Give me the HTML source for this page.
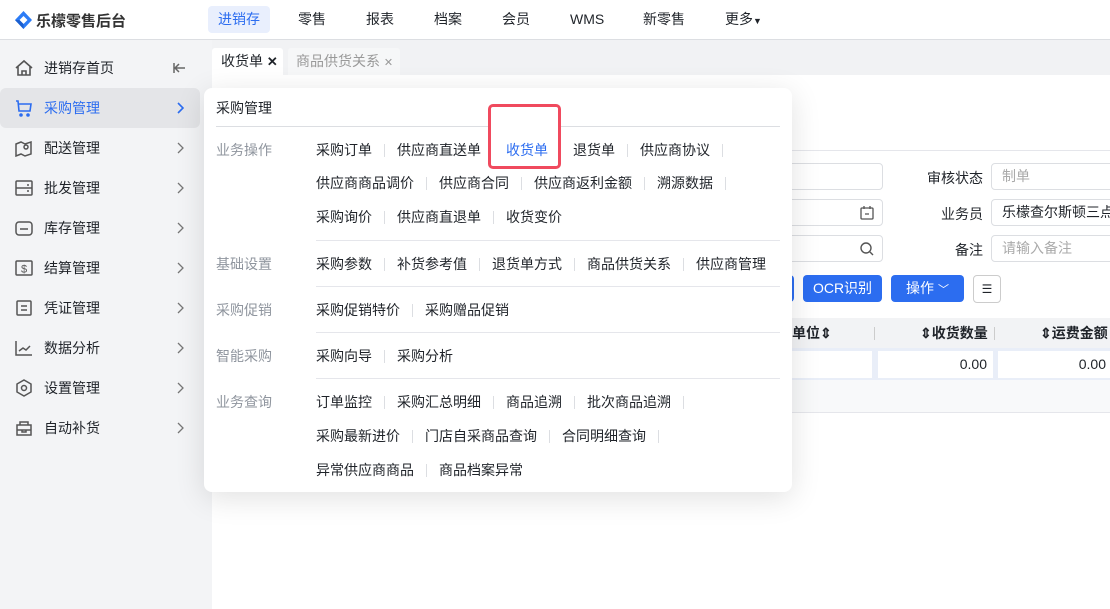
<!DOCTYPE html>
<html><head><meta charset="utf-8"><style>
*{box-sizing:border-box;margin:0;padding:0}
body{width:1110px;height:609px;overflow:hidden;position:relative;background:#fff;font-family:"Liberation Sans","Noto Sans CJK SC",sans-serif;font-size:14px;color:#1f2329}
.abs{position:absolute}
.top{left:0;top:0;width:1110px;height:40px;background:#fff;border-bottom:1px solid #dcdee2}
.nav{top:6px;height:27px;line-height:27px;font-size:14px;color:#1f2329}
.side{left:0;top:40px;width:212px;height:569px;background:#f3f4f6}
.si{left:0;width:200px;height:40px;line-height:40px}
.si span.t{position:absolute;left:44px;font-size:14px}
.si svg{position:absolute;left:14px;top:11px}
.si svg.ch{left:176px;top:14px}
.tabs{left:212px;top:40px;width:898px;height:35px;background:#f1f2f4}
.menu{left:204px;top:88px;width:588px;height:404px;background:#fff;border-radius:8px;box-shadow:0 6px 30px rgba(0,0,0,.12)}
.row{position:absolute;left:112px;display:flex;align-items:center;height:20px;font-size:14px;color:#1f2329;white-space:nowrap}
.row i{display:inline-block;width:1px;height:13px;background:#dcdee2;margin:0 12px}
.gl{position:absolute;left:12px;color:#8f959e;font-size:14px}
.hl{position:absolute;left:112px;width:464px;height:1px;background:#e5e6eb}
.lab{font-size:14px;color:#1f2329;text-align:right;width:80px}
.inp{border:1px solid #dcdee2;border-radius:4px;height:27px;background:#fff;font-size:14px;line-height:25px;padding-left:10px}
.btn{background:#2c6df0;color:#fff;border-radius:4px;height:27px;line-height:27px;text-align:center;font-size:14px}
</style></head><body>
<div class="abs top"></div>
<svg class="abs" style="left:15px;top:11px" width="17" height="18" viewBox="0 0 17 18"><path d="M8.5 0L17 9 8.5 18 0 9Z" fill="#2c7cf6"/><path d="M8.5 5L12.5 9 8.5 13 4.5 9Z" fill="#fff"/><path d="M0 9L4.5 9 8.5 13 8.5 18Z" fill="#1a5fd0"/></svg>
<div class="abs" style="left:36px;top:10px;font-size:15px;font-weight:bold;color:#333">乐檬零售后台</div>
<div class="abs nav" style="left:208px;width:62px;background:#e9effd;color:#2c6df0;border-radius:4px;text-align:center">进销存</div>
<div class="abs nav" style="left:298px">零售</div>
<div class="abs nav" style="left:366px">报表</div>
<div class="abs nav" style="left:434px">档案</div>
<div class="abs nav" style="left:502px">会员</div>
<div class="abs nav" style="left:570px">WMS</div>
<div class="abs nav" style="left:643px">新零售</div>
<div class="abs nav" style="left:725px">更多<span style="font-size:9px">▼</span></div>

<div class="abs side"></div>
<div class="abs si" style="top:48px"><svg width="20" height="18" viewBox="0 0 20 18" fill="none" stroke="#555" stroke-width="1.6"><path d="M2 9L10 2 18 9M4 7.5V16H16V7.5M8 16V12H12V16"/></svg><span class="t">进销存首页</span><svg class="ch" style="left:172px" width="14" height="12" viewBox="0 0 14 12" fill="none" stroke="#666" stroke-width="1.5"><path d="M2 1V11M3 6H13M7 2L3 6 7 10"/></svg></div>
<div class="abs si" style="top:88px;background:#e4e5e8;border-radius:6px;color:#2c6df0"><svg width="20" height="18" viewBox="0 0 20 18" fill="none" stroke="#2c6df0" stroke-width="1.6"><path d="M2 2H4L5 12H16L17 5H5"/><circle cx="7" cy="16" r="1" fill="#2c6df0"/><circle cx="14" cy="16" r="1" fill="#2c6df0"/></svg><span class="t">采购管理</span><svg class="ch" width="8" height="12" viewBox="0 0 8 12" fill="none" stroke="#2c6df0" stroke-width="1.6"><path d="M2 1L7 6 2 11"/></svg></div>
<div class="abs si" style="top:128px"><svg width="20" height="18" viewBox="0 0 20 18" fill="none" stroke="#555" stroke-width="1.5"><path d="M2 5L7 3 11 5 17 3V15L11 17 7 15 2 17Z"/><circle cx="12" cy="8" r="2"/></svg><span class="t">配送管理</span><svg class="ch" width="8" height="12" viewBox="0 0 8 12" fill="none" stroke="#777" stroke-width="1.3"><path d="M2 1L7 6 2 11"/></svg></div>
<div class="abs si" style="top:168px"><svg width="20" height="18" viewBox="0 0 20 18" fill="none" stroke="#555" stroke-width="1.5"><rect x="2" y="2" width="16" height="14" rx="1"/><path d="M2 9H18M13 6H15M13 12H15"/></svg><span class="t">批发管理</span><svg class="ch" width="8" height="12" viewBox="0 0 8 12" fill="none" stroke="#777" stroke-width="1.3"><path d="M2 1L7 6 2 11"/></svg></div>
<div class="abs si" style="top:208px"><svg width="20" height="18" viewBox="0 0 20 18" fill="none" stroke="#555" stroke-width="1.5"><rect x="2" y="3" width="16" height="13" rx="3"/><path d="M6 10H14"/></svg><span class="t">库存管理</span><svg class="ch" width="8" height="12" viewBox="0 0 8 12" fill="none" stroke="#777" stroke-width="1.3"><path d="M2 1L7 6 2 11"/></svg></div>
<div class="abs si" style="top:248px"><svg width="20" height="18" viewBox="0 0 20 18" fill="none" stroke="#555" stroke-width="1.5"><rect x="2" y="2" width="16" height="14" rx="1"/><text x="10" y="13.5" font-size="11" text-anchor="middle" fill="#555" stroke="none" font-family="Liberation Sans">$</text></svg><span class="t">结算管理</span><svg class="ch" width="8" height="12" viewBox="0 0 8 12" fill="none" stroke="#777" stroke-width="1.3"><path d="M2 1L7 6 2 11"/></svg></div>
<div class="abs si" style="top:288px"><svg width="20" height="18" viewBox="0 0 20 18" fill="none" stroke="#555" stroke-width="1.5"><rect x="3" y="2" width="14" height="14" rx="1"/><path d="M7 7H13M7 11H13"/></svg><span class="t">凭证管理</span><svg class="ch" width="8" height="12" viewBox="0 0 8 12" fill="none" stroke="#777" stroke-width="1.3"><path d="M2 1L7 6 2 11"/></svg></div>
<div class="abs si" style="top:328px"><svg width="20" height="18" viewBox="0 0 20 18" fill="none" stroke="#555" stroke-width="1.5"><path d="M2 2V16H18M5 12L9 9 12 11 16 7"/></svg><span class="t">数据分析</span><svg class="ch" width="8" height="12" viewBox="0 0 8 12" fill="none" stroke="#777" stroke-width="1.3"><path d="M2 1L7 6 2 11"/></svg></div>
<div class="abs si" style="top:368px"><svg width="20" height="18" viewBox="0 0 20 18" fill="none" stroke="#555" stroke-width="1.5"><path d="M10 1L17 5V13L10 17 3 13V5Z"/><circle cx="10" cy="9" r="2.5"/></svg><span class="t">设置管理</span><svg class="ch" width="8" height="12" viewBox="0 0 8 12" fill="none" stroke="#777" stroke-width="1.3"><path d="M2 1L7 6 2 11"/></svg></div>
<div class="abs si" style="top:408px"><svg width="20" height="18" viewBox="0 0 20 18" fill="none" stroke="#555" stroke-width="1.5"><path d="M6 6V3H14V6M3 6H17V16H3ZM3 11H17M8 11V13H12V11"/></svg><span class="t">自动补货</span><svg class="ch" width="8" height="12" viewBox="0 0 8 12" fill="none" stroke="#777" stroke-width="1.3"><path d="M2 1L7 6 2 11"/></svg></div>

<div class="abs tabs"></div>
<div class="abs" style="left:212px;top:48px;width:71px;height:27px;background:#fff;border-radius:3px 3px 0 0;line-height:27px;padding-left:9px">收货单 <b style="font-size:13px">✕</b></div>
<div class="abs" style="left:288px;top:48px;width:112px;height:27px;background:#f6f7f8;border-radius:3px 3px 0 0;line-height:27px;padding-left:8px;color:#999">商品供货关系 <span style="font-size:11px">✕</span></div>

<div class="abs" style="left:780px;top:150px;width:330px;height:1px;background:#e5e6eb"></div>
<div class="abs inp" style="left:700px;top:163px;width:183px"></div>
<div class="abs inp" style="left:700px;top:199px;width:183px"><svg style="position:absolute;right:8px;top:6px" width="14" height="14" viewBox="0 0 14 14" fill="none" stroke="#555" stroke-width="1.3"><rect x="1" y="2" width="12" height="11" rx="1"/><path d="M4 0V3M10 0V3M5 8H9"/></svg></div>
<div class="abs inp" style="left:700px;top:235px;width:183px"><svg style="position:absolute;right:8px;top:6px" width="14" height="14" viewBox="0 0 14 14" fill="none" stroke="#555" stroke-width="1.4"><circle cx="6" cy="6" r="5"/><path d="M10 10L13 13"/></svg></div>
<div class="abs lab" style="left:903px;top:168px">审核状态</div>
<div class="abs lab" style="left:903px;top:204px">业务员</div>
<div class="abs lab" style="left:903px;top:240px">备注</div>
<div class="abs inp" style="left:991px;top:163px;width:130px;color:#aaa">制单</div>
<div class="abs inp" style="left:991px;top:199px;width:130px">乐檬查尔斯顿三点</div>
<div class="abs inp" style="left:991px;top:235px;width:130px;color:#aaa">请输入备注</div>
<div class="abs btn" style="left:740px;top:275px;width:54px"></div>
<div class="abs btn" style="left:803px;top:275px;width:79px">OCR识别</div>
<div class="abs btn" style="left:891px;top:275px;width:73px">操作 <span style="font-size:11px">﹀</span></div>
<div class="abs" style="left:973px;top:275px;width:28px;height:28px;border:1px solid #ccc;border-radius:4px;text-align:center;line-height:26px;font-size:12px">☰</div>
<div class="abs" style="left:780px;top:318px;width:330px;height:30px;background:#f2f3f5;font-weight:bold;line-height:30px">
<span style="position:absolute;left:12px">单位⇕</span><span style="position:absolute;left:94px;top:9px;width:1px;height:13px;background:#ccc"></span>
<span style="position:absolute;left:140px">⇕收货数量</span><span style="position:absolute;left:214px;top:9px;width:1px;height:13px;background:#ccc"></span>
<span style="position:absolute;left:260px">⇕运费金额</span></div>
<div class="abs" style="left:780px;top:348px;width:330px;height:32px;background:#e9eef8"></div>
<div class="abs" style="left:780px;top:351px;width:92px;height:27px;background:#fff"></div>
<div class="abs" style="left:878px;top:351px;width:115px;height:27px;background:#fff;text-align:right;padding-right:6px;line-height:27px">0.00</div>
<div class="abs" style="left:998px;top:351px;width:112px;height:27px;background:#fff;text-align:right;padding-right:4px;line-height:27px">0.00</div>
<div class="abs" style="left:780px;top:380px;width:330px;height:33px;background:#f8f9fa;border-bottom:1px solid #e5e6eb"></div>

<div class="abs menu">
<div style="position:absolute;left:12px;top:10px;font-size:14px">采购管理</div>
<div style="position:absolute;left:12px;top:38px;width:564px;height:1px;background:#dcdee2"></div>
<div class="gl" style="top:52px">业务操作</div>
<div class="row" style="top:52px">采购订单<i></i>供应商直送单<i></i><span style="color:#2c6df0">收货单</span><i></i>退货单<i></i>供应商协议<i></i></div>
<div class="row" style="top:85px">供应商商品调价<i></i>供应商合同<i></i>供应商返利金额<i></i>溯源数据<i></i></div>
<div class="row" style="top:119px">采购询价<i></i>供应商直退单<i></i>收货变价</div>
<div class="hl" style="top:152px"></div>
<div class="gl" style="top:166px">基础设置</div>
<div class="row" style="top:166px">采购参数<i></i>补货参考值<i></i>退货单方式<i></i>商品供货关系<i></i>供应商管理</div>
<div class="hl" style="top:198px"></div>
<div class="gl" style="top:212px">采购促销</div>
<div class="row" style="top:212px">采购促销特价<i></i>采购赠品促销</div>
<div class="hl" style="top:244px"></div>
<div class="gl" style="top:258px">智能采购</div>
<div class="row" style="top:258px">采购向导<i></i>采购分析</div>
<div class="hl" style="top:290px"></div>
<div class="gl" style="top:304px">业务查询</div>
<div class="row" style="top:304px">订单监控<i></i>采购汇总明细<i></i>商品追溯<i></i>批次商品追溯<i></i></div>
<div class="row" style="top:338px">采购最新进价<i></i>门店自采商品查询<i></i>合同明细查询<i></i></div>
<div class="row" style="top:372px">异常供应商商品<i></i>商品档案异常</div>
<div style="position:absolute;left:284px;top:16px;width:73px;height:65px;border:3px solid #f04a5e;border-radius:5px;background:#fff;z-index:-0"></div>
<div style="position:absolute;left:302px;top:52px;color:#2c6df0;font-size:14px">收货单</div>
</div>
</body></html>
